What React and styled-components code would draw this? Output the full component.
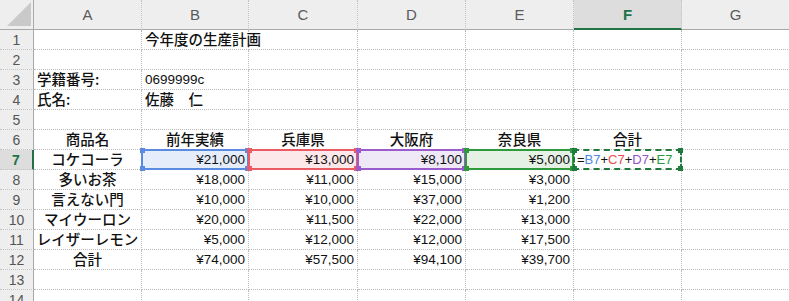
import styled, { createGlobalStyle } from 'styled-components';

const GlobalStyle = createGlobalStyle`
  body {
    margin: 0;
    background: #ffffff;
    overflow: hidden;
  }
`

const COLS = ['A', 'B', 'C', 'D', 'E', 'F', 'G']

const rows = [
  ['', { t: '今年度の生産計画', wide: true }],
  [],
  [{ t: '学籍番号:' }, { t: '0699999c', num: true }],
  [{ t: '氏名:' }, { t: '佐藤　仁' }],
  [],
  [
    { t: '商品名', c: true }, { t: '前年実績', c: true }, { t: '兵庫県', c: true },
    { t: '大阪府', c: true }, { t: '奈良県', c: true }, { t: '合計', c: true },
  ],
  [
    { t: 'コケコーラ', c: true },
    { t: '¥21,000', r: true, hl: 'blue' },
    { t: '¥13,000', r: true, hl: 'red' },
    { t: '¥8,100', r: true, hl: 'purple' },
    { t: '¥5,000', r: true, hl: 'green' },
    { formula: true, hl: 'active' },
  ],
  [{ t: '多いお茶', c: true }, { t: '¥18,000', r: true }, { t: '¥11,000', r: true }, { t: '¥15,000', r: true }, { t: '¥3,000', r: true }],
  [{ t: '言えない門', c: true }, { t: '¥10,000', r: true }, { t: '¥10,000', r: true }, { t: '¥37,000', r: true }, { t: '¥1,200', r: true }],
  [{ t: 'マイウーロン', c: true }, { t: '¥20,000', r: true }, { t: '¥11,500', r: true }, { t: '¥22,000', r: true }, { t: '¥13,000', r: true }],
  [{ t: 'レイザーレモン', c: true }, { t: '¥5,000', r: true }, { t: '¥12,000', r: true }, { t: '¥12,000', r: true }, { t: '¥17,500', r: true }],
  [{ t: '合計', c: true }, { t: '¥74,000', r: true }, { t: '¥57,500', r: true }, { t: '¥94,100', r: true }, { t: '¥39,700', r: true }],
  [],
  [],
]

const highlight = {
  blue: { line: '#5a8be0', fill: '#e6edfa' },
  red: { line: '#ea5b63', fill: '#fce8ea' },
  purple: { line: '#9a5bcc', fill: '#eee8f7' },
  green: { line: '#2f9a3c', fill: '#e5f1e5' },
  active: { line: '#1f7a3e', fill: 'transparent', dashed: true },
}

const Sheet = styled.div`
  display: grid;
  grid-template-columns: 34px 108px 107px 109px 108px 108px 108px 108px;
  grid-template-rows: 30px;
  grid-auto-rows: 20px;
  width: 790px;
  height: 301px;
  overflow: hidden;
  font-family: "Liberation Sans", "Noto Sans CJK JP", sans-serif;
  color: #111;
`

const Corner = styled.div`
  background: #eeeeee;
  border-right: 1px solid #a9a9a9;
  border-bottom: 1px solid #a9a9a9;
  display: flex;
  align-items: flex-end;
  justify-content: flex-end;
  padding: 0 2px 3px 0;
  box-sizing: border-box;
`

const ColHeader = styled.div`
  background: ${p => (p.$active ? '#dddddd' : '#eeeeee')};
  border-right: 1px dotted #c4c4c4;
  border-bottom: ${p => (p.$active ? '2px solid #217346' : '1px solid #a9a9a9')};
  box-sizing: border-box;
  display: flex;
  align-items: center;
  justify-content: center;
  padding-top: ${p => (p.$active ? '1px' : '0')};
  font-size: 15px;
  color: ${p => (p.$active ? '#217346' : '#5a5a5a')};
  font-weight: ${p => (p.$active ? 'bold' : 'normal')};
`

const RowHeader = styled.div`
  background: ${p => (p.$active ? '#dddddd' : '#eeeeee')};
  border-right: ${p => (p.$active ? '2px solid #217346' : '1px solid #a9a9a9')};
  border-bottom: 1px dotted #c4c4c4;
  box-sizing: border-box;
  display: flex;
  align-items: center;
  justify-content: center;
  font-size: 14px;
  color: ${p => (p.$active ? '#217346' : '#555555')};
  font-weight: ${p => (p.$active ? 'bold' : 'normal')};
`

const Cell = styled.div`
  position: relative;
  box-sizing: border-box;
  border-right: 1px dotted #bdbdbd;
  border-bottom: 1px dotted #bdbdbd;
  display: flex;
  align-items: center;
  justify-content: ${p => p.$align};
  padding: 0 3px 0 3px;
  white-space: nowrap;
  overflow: visible;
  font-size: ${p => (p.$num ? '13.5px' : '14.5px')};
  font-weight: ${p => (p.$num ? 'normal' : '500')};
  font-family: ${p => (p.$num
    ? '"Liberation Sans", "Noto Sans CJK JP", sans-serif'
    : '"Noto Sans CJK JP", "Liberation Sans", sans-serif')};
  line-height: 1;
  z-index: ${p => (p.$wide ? 1 : 'auto')};
`

const Text = styled.span`
  position: relative;
  z-index: 3;
`

const Highlight = styled.div`
  position: absolute;
  top: -1px;
  left: -1px;
  right: -1px;
  bottom: -1px;
  border: 2px ${p => (p.$dashed ? 'dashed' : 'solid')} ${p => p.$line};
  background: ${p => p.$fill};
  z-index: 2;
  pointer-events: none;
`

const Handle = styled.span`
  position: absolute;
  width: 5px;
  height: 5px;
  background: ${p => p.$line};
  top: ${p => (p.$top ? '-3px' : 'auto')};
  bottom: ${p => (p.$top ? 'auto' : '-3px')};
  left: ${p => (p.$left ? '-3px' : 'auto')};
  right: ${p => (p.$left ? 'auto' : '-3px')};
`

const Formula = styled.span`
  font-family: "Liberation Sans", sans-serif;
  font-size: 13px;
  font-weight: normal;
  color: #111;
  position: relative;
  z-index: 3;
`

const Ref = styled.span`
  color: ${p => p.$color};
`

const Triangle = () => (
  <svg width="24" height="24" viewBox="0 0 24 24">
    <polygon points="24,0 24,24 0,24" fill="#c9c9c9" />
  </svg>
)

const FormulaText = () => (
  <Formula>
    =<Ref $color="#4d86e6">B7</Ref>+<Ref $color="#ec4a50">C7</Ref>+<Ref $color="#9552cc">D7</Ref>+<Ref $color="#2b9a3a">E7</Ref>
  </Formula>
)

const App = () => {
  return (
    <>
      <GlobalStyle />
      <Sheet>
        <Corner><Triangle /></Corner>
        {COLS.map(c => (
          <ColHeader key={c} $active={c === 'F'}>{c}</ColHeader>
        ))}
        {rows.map((row, ri) => {
          const n = ri + 1
          return [
            <RowHeader key={`h${n}`} $active={n === 7}>{n}</RowHeader>,
            ...COLS.map((c, ci) => {
              const cell = row[ci] || {}
              const align = cell.r ? 'flex-end' : cell.c ? 'center' : 'flex-start'
              const isNum = cell.r || cell.num
              const hl = cell.hl ? highlight[cell.hl] : null
              return (
                <Cell key={`${c}${n}`} $align={align} $num={isNum} $wide={cell.wide}>
                  {hl && (
                    <Highlight $line={hl.line} $fill={hl.fill} $dashed={hl.dashed}>
                      <Handle $line={hl.line} $top $left />
                      <Handle $line={hl.line} $top />
                      <Handle $line={hl.line} $left />
                      <Handle $line={hl.line} />
                    </Highlight>
                  )}
                  {cell.formula ? <FormulaText /> : cell.t && <Text>{cell.t}</Text>}
                </Cell>
              )
            }),
          ]
        })}
      </Sheet>
    </>
  )
}

export default App
